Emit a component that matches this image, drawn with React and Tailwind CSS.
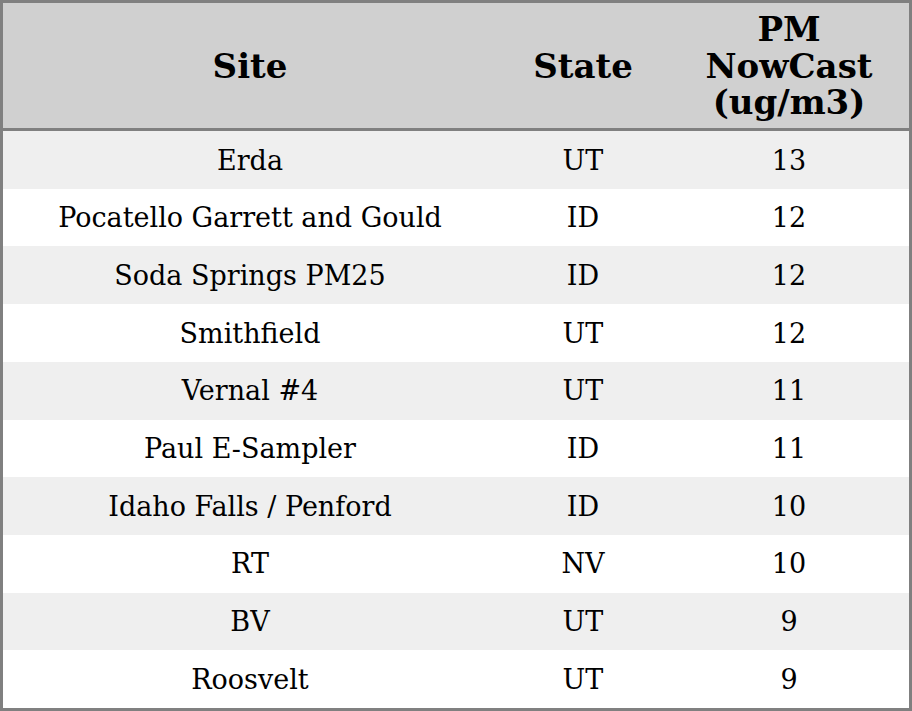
import React from "react";

const rows = [
  ["Erda", "UT", "13"],
  ["Pocatello Garrett and Gould", "ID", "12"],
  ["Soda Springs PM25", "ID", "12"],
  ["Smithfield", "UT", "12"],
  ["Vernal #4", "UT", "11"],
  ["Paul E-Sampler", "ID", "11"],
  ["Idaho Falls / Penford", "ID", "10"],
  ["RT", "NV", "10"],
  ["BV", "UT", "9"],
  ["Roosvelt", "UT", "9"],
];

const cols = "grid grid-cols-[494px_172px_240px]";

export default function App() {
  return (
    <div className="w-[912px] h-[711px] bg-white font-['DejaVu_Serif',serif] text-black">
      <div className="border-[3px] border-[#808080] h-full flex flex-col">
        {/* Header */}
        <div className={`${cols} h-[128px] shrink-0 bg-[#d0d0d0] border-b-[3px] border-[#808080] font-bold text-[34px] leading-[36.5px] pt-px`}>
          <div className="flex items-center justify-center text-center">Site</div>
          <div className="flex items-center justify-center text-center">State</div>
          <div className="flex items-center justify-center text-center">
            PM
            <br />
            NowCast
            <br />
            (ug/m3)
          </div>
        </div>

        {/* Body */}
        <div className="flex-1 grid grid-rows-10 text-[27px]">
          {rows.map((r, i) => (
            <div key={i} className={`${cols} pt-[2px] ${i % 2 === 0 ? "bg-[#efefef]" : "bg-white"}`}>
              <div className="flex items-center justify-center">{r[0]}</div>
              <div className="flex items-center justify-center">{r[1]}</div>
              <div className="flex items-center justify-center">{r[2]}</div>
            </div>
          ))}
        </div>
      </div>
    </div>
  );
}
